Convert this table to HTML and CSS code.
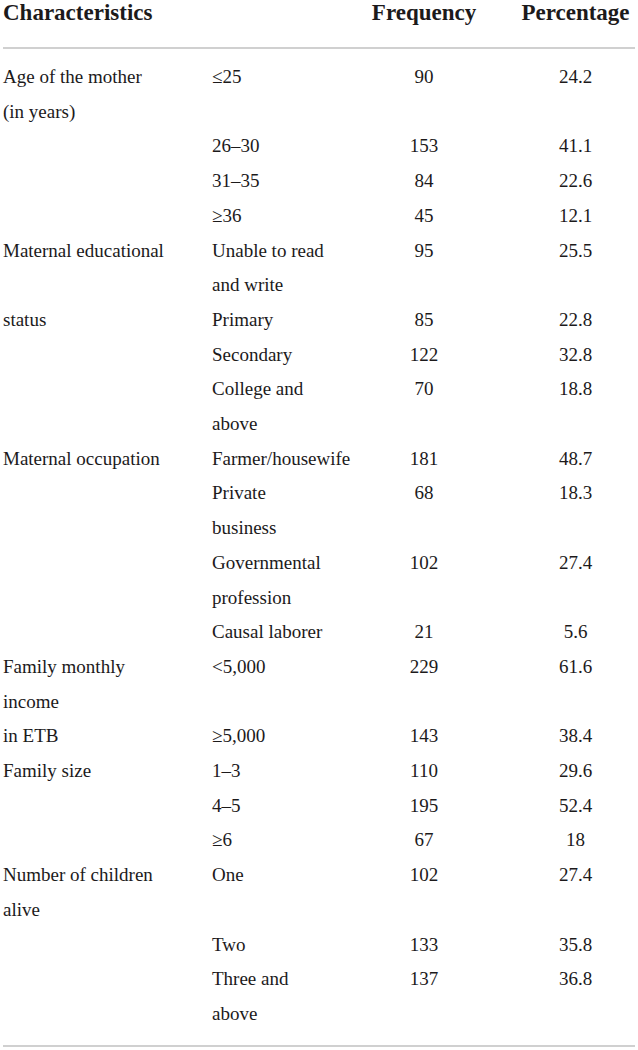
FILE: index.html
```html
<!DOCTYPE html>
<html>
	<head>
		<meta charset="UTF-8">
		<title>Table 1</title>
		<link rel="stylesheet" href="styles.css">
	</head>
	<body>
		<table id="tab">
			<thead>
				<tr>
					<th class="c1">Characteristics</th>
					<th class="c2"></th>
					<th class="c3">Frequency</th>
					<th class="c4">Percentage</th>
				</tr>
			</thead>
			<tbody>
				<tr class="first">
					<td>Age of the mother<br>(in years)</td>
					<td>&le;25</td>
					<td class="num">90</td>
					<td class="pct">24.2</td>
				</tr>
				<tr>
					<td></td>
					<td>26&ndash;30</td>
					<td class="num">153</td>
					<td class="pct">41.1</td>
				</tr>
				<tr>
					<td></td>
					<td>31&ndash;35</td>
					<td class="num">84</td>
					<td class="pct">22.6</td>
				</tr>
				<tr>
					<td></td>
					<td>&ge;36</td>
					<td class="num">45</td>
					<td class="pct">12.1</td>
				</tr>
				<tr>
					<td>Maternal educational</td>
					<td>Unable to read<br>and write</td>
					<td class="num">95</td>
					<td class="pct">25.5</td>
				</tr>
				<tr>
					<td>status</td>
					<td>Primary</td>
					<td class="num">85</td>
					<td class="pct">22.8</td>
				</tr>
				<tr>
					<td></td>
					<td>Secondary</td>
					<td class="num">122</td>
					<td class="pct">32.8</td>
				</tr>
				<tr>
					<td></td>
					<td>College and<br>above</td>
					<td class="num">70</td>
					<td class="pct">18.8</td>
				</tr>
				<tr>
					<td>Maternal occupation</td>
					<td>Farmer/housewife</td>
					<td class="num">181</td>
					<td class="pct">48.7</td>
				</tr>
				<tr>
					<td></td>
					<td>Private<br>business</td>
					<td class="num">68</td>
					<td class="pct">18.3</td>
				</tr>
				<tr>
					<td></td>
					<td>Governmental<br>profession</td>
					<td class="num">102</td>
					<td class="pct">27.4</td>
				</tr>
				<tr>
					<td></td>
					<td>Causal laborer</td>
					<td class="num">21</td>
					<td class="pct">5.6</td>
				</tr>
				<tr>
					<td>Family monthly<br>income</td>
					<td>&lt;5,000</td>
					<td class="num">229</td>
					<td class="pct">61.6</td>
				</tr>
				<tr>
					<td>in ETB</td>
					<td>&ge;5,000</td>
					<td class="num">143</td>
					<td class="pct">38.4</td>
				</tr>
				<tr>
					<td>Family size</td>
					<td>1&ndash;3</td>
					<td class="num">110</td>
					<td class="pct">29.6</td>
				</tr>
				<tr>
					<td></td>
					<td>4&ndash;5</td>
					<td class="num">195</td>
					<td class="pct">52.4</td>
				</tr>
				<tr>
					<td></td>
					<td>&ge;6</td>
					<td class="num">67</td>
					<td class="pct">18</td>
				</tr>
				<tr>
					<td>Number of children<br>alive</td>
					<td>One</td>
					<td class="num">102</td>
					<td class="pct">27.4</td>
				</tr>
				<tr>
					<td></td>
					<td>Two</td>
					<td class="num">133</td>
					<td class="pct">35.8</td>
				</tr>
				<tr class="last">
					<td></td>
					<td>Three and<br>above</td>
					<td class="num">137</td>
					<td class="pct">36.8</td>
				</tr>
			</tbody>
		</table>
	</body>
</html>
```

FILE: styles.css
```css
body{
	margin: 0;
	background: #fff;
	color: #1c1a1b;
	font-family: "Liberation Serif", "Times New Roman", serif;
}
#tab{
	width: 632px;
	margin-left: 3px;
	border-collapse: collapse;
	table-layout: fixed;
}
th, td{
	padding: 0;
	vertical-align: top;
}
th{
	font-size: 23px;
	line-height: 25px;
	font-weight: bold;
	padding-bottom: 22px;
	border-bottom: 2px solid #d0d0d0;
}
td{
	font-size: 19px;
	line-height: 34.7px;
}
.c1{
	width: 209px;
	text-align: left;
}
.c2{
	width: 149px;
}
.c3{
	width: 126px;
	text-align: center;
}
.c4{
	width: 119px;
	padding-left: 29px;
	text-align: center;
}
.num{
	text-align: center;
}
.pct{
	padding-left: 29px;
	text-align: center;
}
.first td{
	padding-top: 11px;
}
.last td{
	padding-bottom: 13px;
	border-bottom: 2px solid #d0d0d0;
}
```
